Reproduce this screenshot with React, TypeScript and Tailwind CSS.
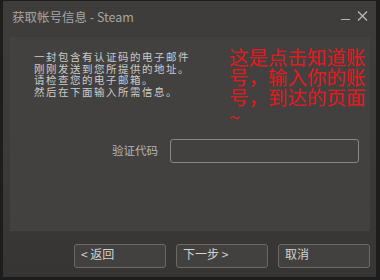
import React from "react";

const font = "font-['Noto_Sans_CJK_SC','Liberation_Sans',sans-serif]";

const WizardButton = ({ label }: { label: string }) => (
  <button className="w-[92px] h-[24px] rounded-[3px] border border-[#6b6967] bg-[#43413f] text-left pl-[6px] pb-[4px] text-[12px] leading-[12px] text-[#d2d2d2]">
    {label}
  </button>
);

const App = () => {
  return (
    <div
      className={`w-[380px] h-[280px] flex flex-col border-t border-l-[3px] border-r-[4px] border-b-[3px] border-[#1d1d1d] bg-gradient-to-b from-[#3f3d3b] via-[#3d3b39] to-[#373533] ${font}`}
    >
      {/* title bar */}
      <div className="h-[36px] flex items-start justify-between pl-[9px] pr-[8px] pt-[9px]">
        <span className="text-[12.5px] leading-[14px] text-[#a5a5a5]">
          获取帐号信息 - Steam
        </span>
        <div className="flex items-start gap-[7px] text-[#b4b4b4]">
          <div className="w-[9px] h-[1px] bg-[#b4b4b4] mt-[9px]" />
          <svg width="11" height="10" viewBox="0 0 11 10" className="mt-[1px]">
            <path d="M1 0.5 L10 9.5 M10 0.5 L1 9.5" stroke="#b8b8b8" strokeWidth="1.3" />
          </svg>
        </div>
      </div>

      {/* content panel */}
      <div className="ml-[7px] w-[360px] h-[194px] bg-[#43413f]">
        <div className="flex">
          <p className="pl-[24px] pt-[14px] w-[222px] text-[10.5px] leading-[11.5px] tracking-[1.5px] text-[#cbcbcb]">
            一封包含有认证码的电子邮件
            <br />
            刚刚发送到您所提供的地址。
            <br />
            请检查您的电子邮箱。
            <br />
            然后在下面输入所需信息。
          </p>
          <p className="w-[141px] pt-[10px] ml-[4px] text-[19.5px] leading-[20px] text-[#e01b1f] shrink-0 break-all">
            这是点击知道账号，输入你的账号，到达的页面~
          </p>
        </div>
        <div className="flex items-center mt-[12px]">
          <span className="ml-[102px] w-[58px] text-[11.5px] text-[#b4b4b4]">验证代码</span>
          <div className="w-[189px] h-[24px] rounded-[3px] border border-[#8a8886] bg-[#43413f]" />
        </div>
      </div>

      {/* buttons */}
      <div className="flex justify-end gap-[10px] mr-[6px] mt-[13px]">
        <WizardButton label="< 返回" />
        <WizardButton label="下一步 >" />
        <WizardButton label="取消" />
      </div>
    </div>
  );
};

export default App;
